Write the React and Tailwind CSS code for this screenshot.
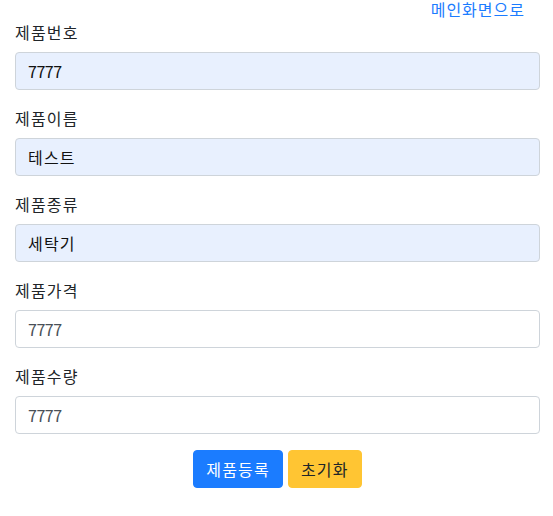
import React, { useState } from "react";

const fields = [
  { label: "제품번호", value: "7777", filled: true },
  { label: "제품이름", value: "테스트", filled: true },
  { label: "제품종류", value: "세탁기", filled: true },
  { label: "제품가격", value: "7777", filled: false },
  { label: "제품수량", value: "7777", filled: false },
];

const App = () => {
  const [form, setForm] = useState(fields.map((f) => f.value));

  return (
    <div
      className="min-h-screen bg-white text-[16px] text-[#212529]"
      style={{ fontFamily: '"Noto Sans CJK KR", "Noto Sans", sans-serif' }}
    >
      <div className="ml-[15px] w-[525px]">
        <div className="flex justify-end pr-[15px] pt-[1px] mb-[3px]">
          <a href="#" className="block leading-[16px] tracking-[1px] text-[#1b7cff]">
            메인화면으로
          </a>
        </div>
        {fields.map((f, i) => (
          <div key={f.label} className="mb-[16px]">
            <label className="block leading-[24px] mb-[8px] tracking-[1.2px]">
              {f.label}
            </label>
            <input
              type="text"
              value={form[i]}
              onChange={(e) => {
                const next = [...form];
                next[i] = e.target.value;
                setForm(next);
              }}
              className={`block w-full h-[38px] px-[12px] border border-[#ced4da] rounded-[4px] outline-none leading-[24px] ${
                /\d/.test(f.value) ? "tracking-[-0.5px]" : "tracking-[1.2px]"
              } ${f.filled ? "bg-[#e8f0fe] text-[#111]" : "bg-white text-[#495057]"}`}
            />
          </div>
        ))}
        <div className="flex justify-center gap-[5px]">
          <button className="h-[38px] px-[12px] rounded-[4px] bg-[#1b7cff] border border-[#1b7cff] text-white leading-[24px] tracking-[1.2px]">
            제품등록
          </button>
          <button className="h-[38px] px-[12px] rounded-[4px] bg-[#ffc533] border border-[#ffc533] text-[#212529] leading-[24px] tracking-[1.2px]">
            초기화
          </button>
        </div>
      </div>
    </div>
  );
};

export default App;
